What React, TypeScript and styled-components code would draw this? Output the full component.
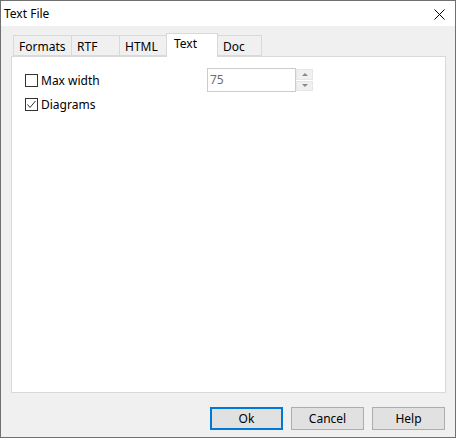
import React from "react";
import styled, { createGlobalStyle } from "styled-components";

const Global = createGlobalStyle`
  html, body { margin: 0; padding: 0; background: #ffffff; }
  * { box-sizing: border-box; }
  body { font-family: "Noto Sans", "Liberation Sans", sans-serif; font-size: 12px; color: #000; }
`;

const Window = styled.div`
  width: 456px;
  height: 438px;
  border: 1px solid #707070;
  display: flex;
  flex-direction: column;
  background: #f0f0f0;
`;

const TitleBar = styled.div`
  height: 25px;
  background: #ffffff;
  display: flex;
  align-items: center;
  justify-content: space-between;
  padding: 0 10px 0 3px;
  font-size: 12px;
  flex-shrink: 0;
`;

const TitleText = styled.span`
  line-height: 16px;
`;

const CloseIcon = styled.svg`
  display: block;
  margin-top: 1px;
`;

const Body = styled.div`
  flex: 1;
  display: flex;
  flex-direction: column;
  padding: 8px 9px 7px 10px;
`;

const TabStrip = styled.div`
  display: flex;
  align-items: flex-end;
  height: 23px;
  padding-left: 2px;
  margin-bottom: -1px;
  position: relative;
  z-index: 1;
`;

const Tab = styled.div<{ $w: number; $active?: boolean }>`
  width: ${(p) => p.$w}px;
  height: ${(p) => (p.$active ? 24 : 21)}px;
  margin-left: -1px;
  margin-bottom: ${(p) => (p.$active ? 0 : 1)}px;
  &:first-child { margin-left: 0; }
  border: 1px solid #d9d9d9;
  border-bottom: ${(p) => (p.$active ? "none" : "1px solid #d9d9d9")};
  background: ${(p) => (p.$active ? "#ffffff" : "#f0f0f0")};
  padding-left: ${(p) => (p.$active ? 7 : 5)}px;
  padding-top: ${(p) => (p.$active ? 2 : 3)}px;
  line-height: 16px;
  font-size: 12px;
  position: relative;
  z-index: ${(p) => (p.$active ? 2 : 1)};
`;

const Panel = styled.div`
  flex: 1;
  background: #ffffff;
  border: 1px solid #d9d9d9;
  padding: 11px 0 0 13px;
  display: grid;
  grid-template-columns: 182px auto;
  grid-auto-rows: 24px;
  align-content: start;
  align-items: center;
`;

const CheckRow = styled.label`
  display: flex;
  align-items: center;
  gap: 3px;
  line-height: 16px;
  padding-top: 1px;
`;

const Box = styled.span`
  width: 13px;
  height: 13px;
  border: 1px solid #333333;
  background: #ffffff;
  display: flex;
  align-items: center;
  justify-content: center;
`;

const Spin = styled.div`
  display: flex;
  height: 24px;
`;

const SpinInput = styled.div`
  width: 89px;
  height: 24px;
  border: 1px solid #cccccc;
  background: #ffffff;
  color: #6d6d6d;
  padding: 0 0 0 2px;
  display: flex;
  align-items: center;
  line-height: 16px;
`;

const SpinButtons = styled.div`
  width: 17px;
  height: 24px;
  display: flex;
  flex-direction: column;
  gap: 1px;
  padding: 1px 0;
`;

const SpinBtn = styled.div`
  flex: 1;
  background: #f0f0f0;
  border: 1px solid #e6e6e6;
  display: flex;
  align-items: center;
  justify-content: center;
`;

const Arrow = styled.span<{ $down?: boolean }>`
  width: 0;
  height: 0;
  border-left: 3px solid transparent;
  border-right: 3px solid transparent;
  ${(p) => (p.$down ? "border-top: 3px solid #8a8a8a;" : "border-bottom: 3px solid #8a8a8a;")}
`;

const ButtonBar = styled.div`
  display: flex;
  justify-content: flex-end;
  gap: 8px;
  margin-top: 14px;
  padding-right: 1px;
`;

const Button = styled.div<{ $default?: boolean }>`
  width: 73px;
  height: 23px;
  background: #e1e1e1;
  border: ${(p) => (p.$default ? "2px solid #0078d7" : "1px solid #adadad")};
  display: flex;
  align-items: center;
  justify-content: center;
  line-height: 16px;
  font-size: 12px;
`;

const tabs = [
  { label: "Formats", w: 59 },
  { label: "RTF", w: 49 },
  { label: "HTML", w: 48 },
  { label: "Text", w: 52, active: true },
  { label: "Doc", w: 45 },
];

export default function App() {
  return (
    <>
      <Global />
      <Window>
        <TitleBar>
          <TitleText>Text File</TitleText>
          <CloseIcon width="11" height="11" viewBox="0 0 11 11">
            <path d="M0.5 0.5 L10.5 10.5 M10.5 0.5 L0.5 10.5" stroke="#000" strokeWidth="1" fill="none" />
          </CloseIcon>
        </TitleBar>
        <Body>
          <TabStrip>
            {tabs.map((t) => (
              <Tab key={t.label} $w={t.w} $active={t.active}>
                {t.label}
              </Tab>
            ))}
          </TabStrip>
          <Panel>
            <CheckRow>
              <Box />
              Max width
            </CheckRow>
            <Spin>
              <SpinInput>75</SpinInput>
              <SpinButtons>
                <SpinBtn>
                  <Arrow />
                </SpinBtn>
                <SpinBtn>
                  <Arrow $down />
                </SpinBtn>
              </SpinButtons>
            </Spin>
            <CheckRow>
              <Box>
                <svg width="11" height="11" viewBox="0 0 11 11">
                  <path d="M1.5 5.5 L4 8.5 L9.5 2" stroke="#333" strokeWidth="1" fill="none" />
                </svg>
              </Box>
              Diagrams
            </CheckRow>
          </Panel>
          <ButtonBar>
            <Button $default>Ok</Button>
            <Button>Cancel</Button>
            <Button>Help</Button>
          </ButtonBar>
        </Body>
      </Window>
    </>
  );
}
